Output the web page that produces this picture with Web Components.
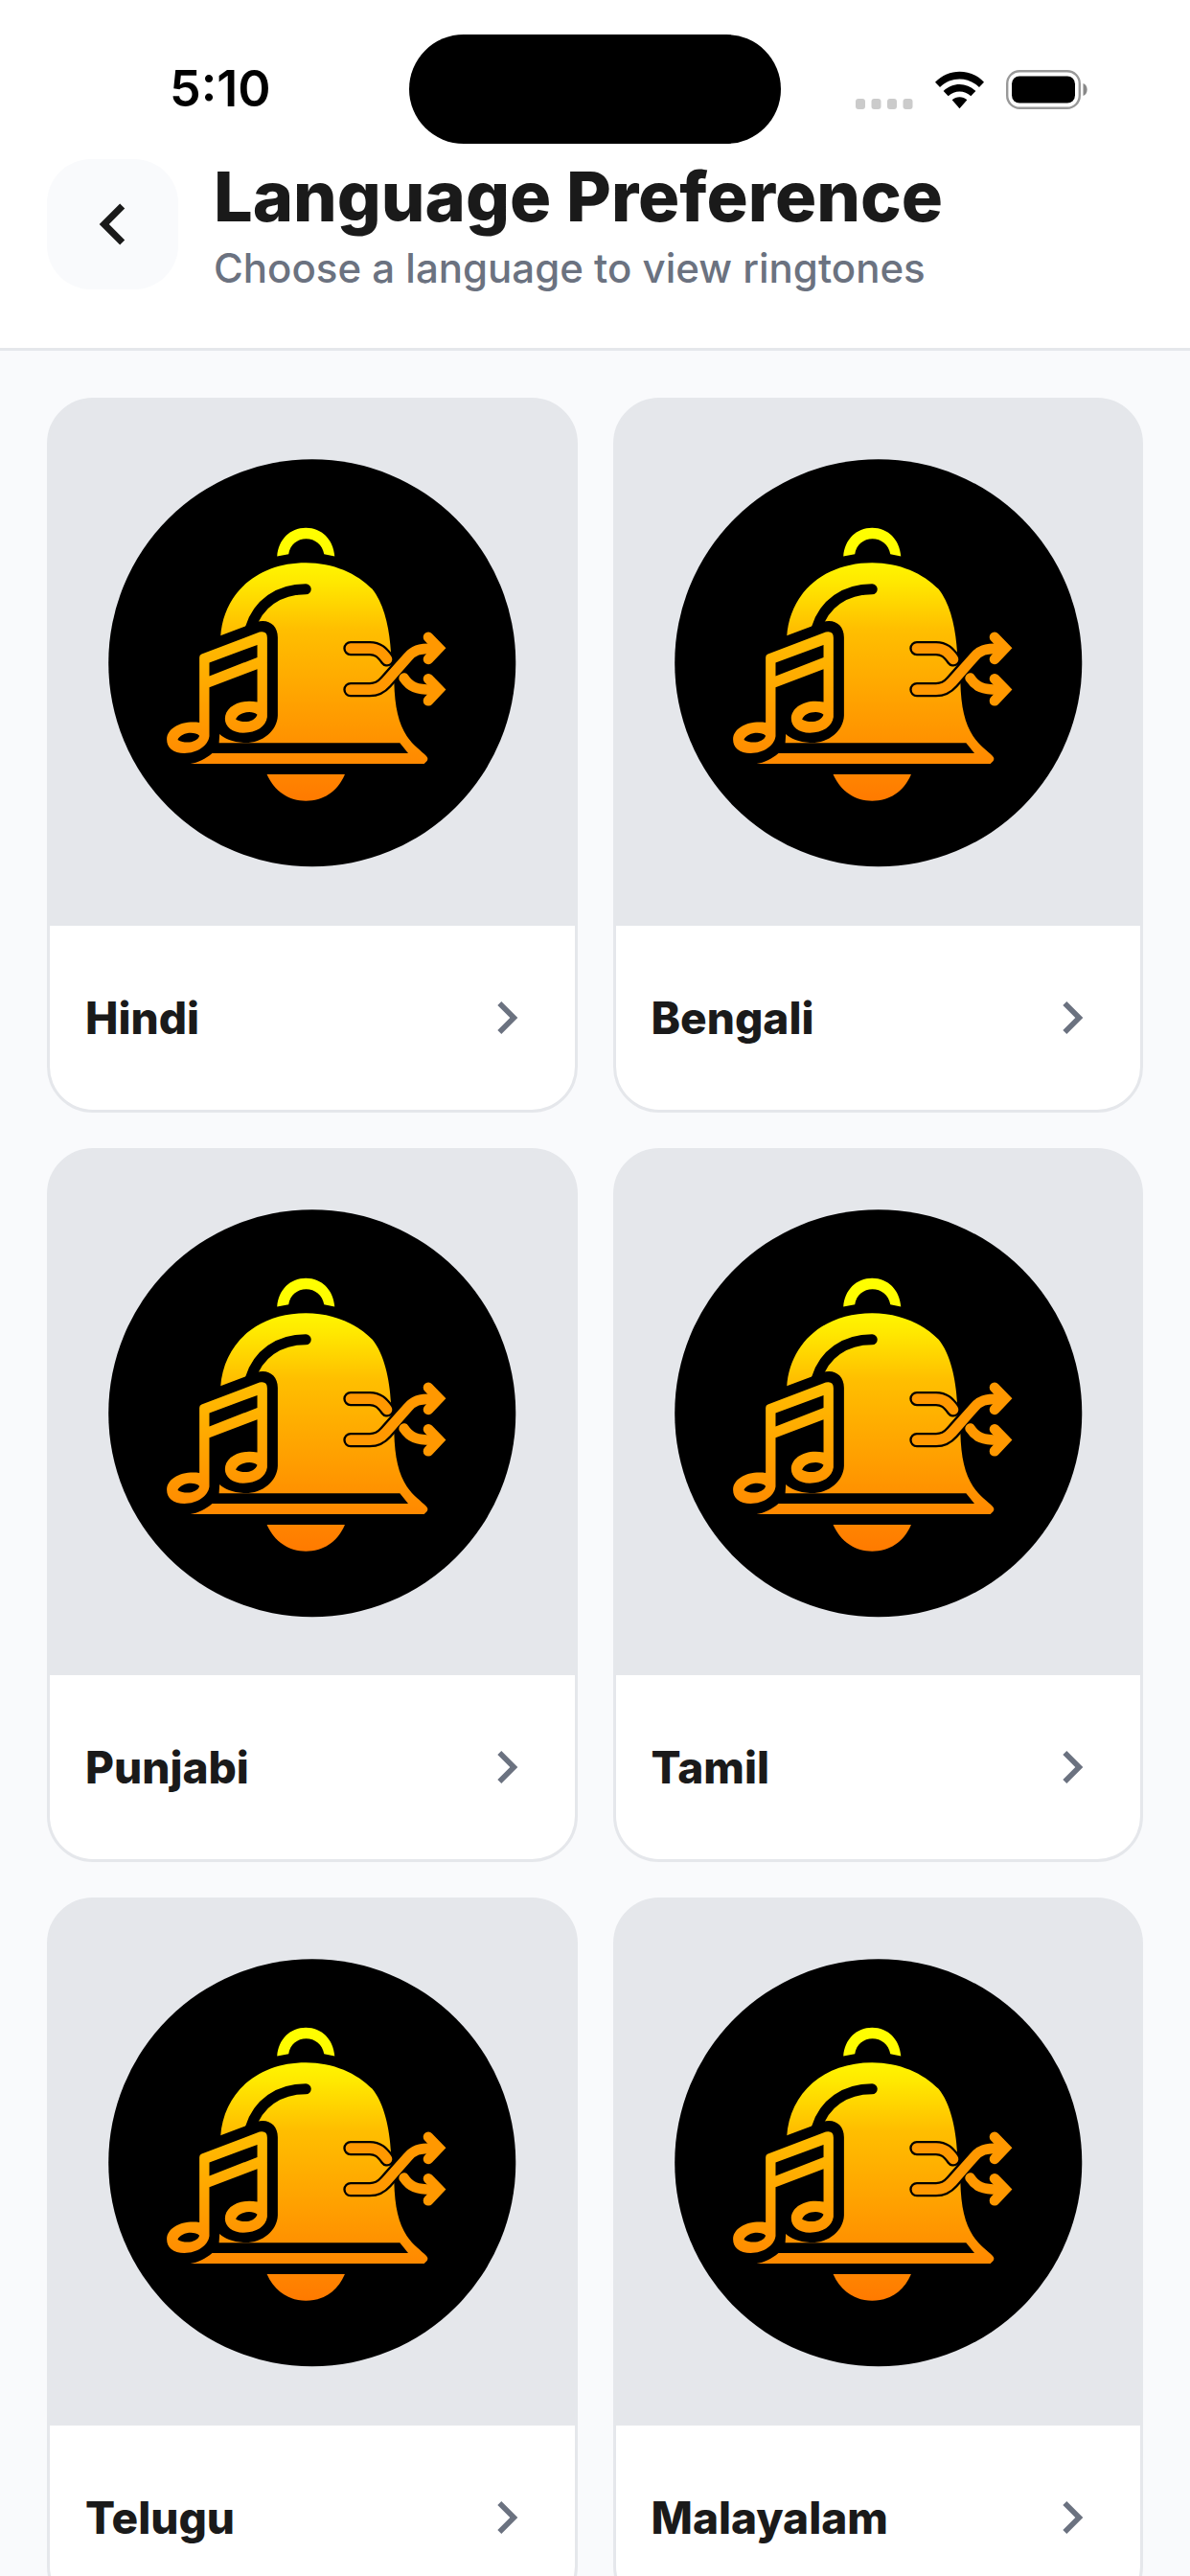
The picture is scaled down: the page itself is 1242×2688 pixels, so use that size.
<!DOCTYPE html>
<html lang="en">
<head>
<meta charset="utf-8">
<meta name="viewport" content="width=device-width, initial-scale=1">
<title>Language Preference</title>
<style>
  html, body { height: 100%; margin: 0; }
  body {
    --ink: #1a1a1a;
    --muted: #6b7280;
    --line: #e5e7eb;
    --surface: #ffffff;
    --canvas: #f9fafc;
    --gutter: 49px;
    font-family: Inter, Roboto, "Liberation Sans", sans-serif;
    color: var(--ink);
    background: var(--canvas);
  }
</style>
</head>
<body>
<app-screen>
  <status-bar slot="top" time="5:10"></status-bar>
  <page-header slot="top">
    <span slot="title">Language Preference</span>
    <span slot="subtitle">Choose a language to view ringtones</span>
  </page-header>
  <language-card href="#hindi">Hindi</language-card>
  <language-card href="#bengali">Bengali</language-card>
  <language-card href="#punjabi">Punjabi</language-card>
  <language-card href="#tamil">Tamil</language-card>
  <language-card href="#telugu">Telugu</language-card>
  <language-card href="#malayalam">Malayalam</language-card>
</app-screen>

<script>
  class BaseElement extends HTMLElement {
    connectedCallback() {
      if (this.shadowRoot) return;
      this.attachShadow({ mode: "open" }).innerHTML = this.render();
    }
  }

  class AppScreen extends BaseElement {
    render() {
      return `
        <style>
          :host { display: flex; flex-direction: column; height: 100vh; }
          header { background: var(--surface); border-bottom: 3px solid var(--line); }
          main {
            flex: 1; min-height: 0; overflow-y: auto; scrollbar-width: none;
            background: var(--canvas);
          }
          .grid {
            display: grid; grid-template-columns: 1fr 1fr;
            gap: 37px; padding: var(--gutter);
          }
        </style>
        <header><slot name="top"></slot></header>
        <main><div class="grid"><slot></slot></div></main>`;
    }
  }

  class StatusBar extends BaseElement {
    render() {
      return `
        <style>
          :host {
            display: grid; grid-template-columns: 1fr auto 1fr; align-items: center;
            padding: 36px 107px 0; color: #000;
          }
          time { padding-left: 70px; font-size: 52px; line-height: 60px; font-weight: 600; }
          .island { width: 388px; height: 114px; border-radius: 57px; background: #000; }
          .icons { display: flex; justify-content: flex-end; align-items: flex-end; gap: 23px; }
          svg { display: block; }
        </style>
        <time>${this.getAttribute("time")}</time>
        <div class="island"></div>
        <div class="icons">
          <svg width="60" height="12" viewBox="0 0 60 12" fill="#cbcbcb" aria-hidden="true">
            <rect x="0" y="1" width="10" height="11" rx="3"/>
            <rect x="16.5" y="1" width="10" height="11" rx="3"/>
            <rect x="33" y="1" width="10" height="11" rx="3"/>
            <rect x="49.5" y="1" width="10" height="11" rx="3"/>
          </svg>
          <svg width="51" height="40" viewBox="345 70 153 120" aria-hidden="true">
            <path d="M345 105C388 61 455 61 498 105L483 121C448 87 395 87 360 121Z"/>
            <path d="M371 133C400 105 443 105 472 133L457 149C437 130 406 130 386 149Z"/>
            <path d="M398 161C411 149 432 149 445 161L421.5 188Z"/>
          </svg>
          <svg width="85" height="41" viewBox="0 0 85 41" aria-hidden="true">
            <rect x="1.2" y="1.2" width="75.6" height="38.6" rx="13" fill="none" stroke="#999" stroke-width="2.4"/>
            <rect x="6" y="6.5" width="66" height="28" rx="8"/>
            <path d="M80.5 14C86 16 86 25 80.5 27Z" fill="#888"/>
          </svg>
        </div>`;
    }
  }

  class PageHeader extends BaseElement {
    render() {
      return `
        <style>
          :host {
            display: flex; align-items: flex-start; gap: 37px;
            padding: 16px var(--gutter) 55px;
          }
          button {
            display: grid; place-items: center; flex: none;
            width: 137px; height: 136px; padding: 0; border: 0; border-radius: 46px;
            background: var(--canvas); color: inherit;
          }
          .text { display: flex; flex-direction: column; gap: 8px; min-width: 0; }
          h1 { margin: 0; font-size: 72px; line-height: 78px; font-weight: 800; }
          p { margin: 0; font-size: 42px; line-height: 56px; font-weight: 500; color: var(--muted); }
        </style>
        <button type="button" aria-label="Back">
          <svg width="86" height="86" viewBox="0 0 24 24" fill="currentColor" aria-hidden="true">
            <path d="M15.41 7.41 14 6l-6 6 6 6 1.41-1.41L10.83 12z"/>
          </svg>
        </button>
        <div class="text">
          <h1><slot name="title"></slot></h1>
          <p><slot name="subtitle"></slot></p>
        </div>`;
    }
  }

  /* Round ringtone badge: bell, music note and shuffle arrows. */
  class RingtoneArt extends BaseElement {
    render() {
      return `
        <style>
          :host { display: block; aspect-ratio: 1; background: var(--line); }
          svg { display: block; width: 100%; height: 100%; }
        </style>
        <svg viewBox="-321 -335 1641 1641" aria-hidden="true">
          <defs>
            <linearGradient id="glow" gradientUnits="userSpaceOnUse" x1="0" y1="63" x2="0" y2="917">
              <stop offset="0" stop-color="#ffff00"/>
              <stop offset=".1" stop-color="#fffb00"/>
              <stop offset=".2" stop-color="#ffe800"/>
              <stop offset=".37" stop-color="#ffbf00"/>
              <stop offset=".75" stop-color="#ff9500"/>
              <stop offset="1" stop-color="#ff7a00"/>
            </linearGradient>
          </defs>
          <circle cx="499.5" cy="485.5" r="637"/>
          <g fill="url(#glow)">
            <path d="M390 152C394 100 430 63 480 63C530 63 566 100 570 152L537 145C532 115 508 97 481 97C454 97 430 115 426 145Z"/>
            <path d="M213 404C222 265 330 172 480 172C565 172 640 205 688 255C725 300 742 380 746 452L756 545C758 625 770 675 796 715C815 743 840 760 857 777Q868 789 850 801H115Z"/>
            <path d="M358 834H602C578 890 533 917 480 917C427 917 382 888 358 834Z"/>
          </g>
          <path d="M200 736H774L800 768H180Z"/>
          <path d="M306 378C330 300 395 255 480 255" fill="none" stroke="#000" stroke-width="33" stroke-linecap="round"/>
          <path d="M205 403L325 358C362 346 392 368 392 405V650C390 700 340 738 285 735C250 733 225 722 210 708L208 740L187 768C165 786 145 797 115 802H60V403Z"/>
          <path fill="url(#glow)" fill-rule="evenodd" d="M147 672V468Q147 461 154 458L335 389Q359 384 359 407V655C355 685 325 704 285 704C250 704 227 685 227 660C227 625 270 597 328 608V505L178 562V715C174 745 140 768 100 768C65 768 45 750 45 725C45 690 90 665 147 672Z
            M178 485L328 429V468L178 527Z
            M328 647C322 667 288 677 261 662C268 639 312 632 328 647Z
            M147 713C141 733 105 741 79 726C87 704 130 697 147 713Z"/>
          <g fill="none" stroke-linecap="round">
            <path d="M620 440H680C705 440 718 452 734 474" stroke="#000" stroke-width="46"/>
            <path d="M620 440H680C705 440 718 452 734 474" stroke="#ff9800" stroke-width="32"/>
            <path d="M620 569H680C702 569 715 562 730 545L798 468C817 446 832 440 865 440" stroke="#000" stroke-width="46"/>
            <g stroke="#ff9800" stroke-width="32">
              <path d="M620 569H680C702 569 715 562 730 545L798 468C817 446 832 440 880 440"/>
              <path d="M787 533C805 560 825 570 880 569"/>
              <path d="M863 405L896 439L863 474M863 535L896 569L863 604"/>
            </g>
          </g>
        </svg>`;
    }
  }

  class LanguageCard extends BaseElement {
    render() {
      return `
        <style>
          :host { display: block; min-width: 0; }
          a {
            display: block; overflow: hidden; color: inherit; text-decoration: none;
            background: var(--line); border: 3px solid var(--line); border-radius: 48px;
          }
          .row {
            display: flex; align-items: center; justify-content: space-between;
            padding: 62px 37px; background: var(--surface);
            font-size: 46px; line-height: 68px; font-weight: 800;
          }
          svg { display: block; flex: none; color: var(--muted); }
        </style>
        <a href="${this.getAttribute("href")}">
          <ringtone-art></ringtone-art>
          <div class="row">
            <slot></slot>
            <svg width="68" height="68" viewBox="0 0 24 24" fill="currentColor" aria-hidden="true">
              <path d="M10 6 8.59 7.41 13.17 12l-4.58 4.59L10 18l6-6z"/>
            </svg>
          </div>
        </a>`;
    }
  }

  customElements.define("ringtone-art", RingtoneArt);
  customElements.define("language-card", LanguageCard);
  customElements.define("page-header", PageHeader);
  customElements.define("status-bar", StatusBar);
  customElements.define("app-screen", AppScreen);
</script>
</body>
</html>
